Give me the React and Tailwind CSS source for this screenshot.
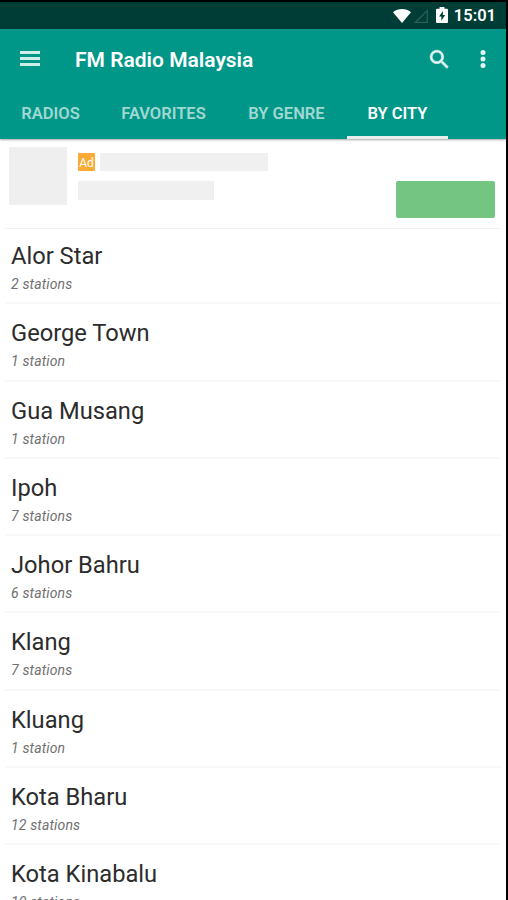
import React from "react";

const tabs = [
  { label: "RADIOS", className: "w-[101px]" },
  { label: "FAVORITES", className: "w-[125px]" },
  { label: "BY GENRE", className: "w-[121px]" },
  { label: "BY CITY", className: "w-[101px]", active: true },
];

const cities = [
  { name: "Alor Star", count: 2 },
  { name: "George Town", count: 1 },
  { name: "Gua Musang", count: 1 },
  { name: "Ipoh", count: 7 },
  { name: "Johor Bahru", count: 6 },
  { name: "Klang", count: 7 },
  { name: "Kluang", count: 1 },
  { name: "Kota Bharu", count: 12 },
  { name: "Kota Kinabalu", count: 10 },
];

const StatusBar = () => (
  <div className="flex h-[29px] shrink-0 items-center justify-end border-t-2 border-black bg-[#003d36] pr-[10px] text-white">
    {/* Wifi */}
    <svg className="h-[14px] w-[18px]" viewBox="0 0 18 14" fill="currentColor">
      <path d="M9 14 0 3.2C2.6 1.1 5.700 0 9 0s6.400 1.100 9 3.200z" />
    </svg>
    {/* No signal */}
    <svg className="ml-[3px] h-[14px] w-[14px]" viewBox="0 0 14 14" fill="none" stroke="#2c6059" strokeWidth="1.3">
      <path d="M1.600 13.300 13.300 1.600v11.700z" />
    </svg>
    {/* Battery charging */}
    <svg className="ml-[8px] mb-px h-[16px] w-[12px]" viewBox="0 0 11 16" preserveAspectRatio="none">
      <path fill="currentColor" d="M3.300 0h4.400v1.800H10a1 1 0 0 1 1 1V15a1 1 0 0 1-1 1H1a1 1 0 0 1-1-1V2.800a1 1 0 0 1 1-1h2.300z" />
      <path fill="#003d36" d="M6.300 4 2.800 9.600h2.100V13.800L8.400 8H6.300z" />
    </svg>
    <span className="ml-[6px] pt-[2px] text-[16.500px] font-semibold leading-none">15:01</span>
  </div>
);

const Toolbar = () => (
  <div className="flex h-[61px] items-center pl-5 pr-5 text-white">
    <svg className="mb-[3px] h-[15px] w-5" viewBox="0 0 20 15" fill="#cfeeea">
      <path d="M0 0h20v3H0zM0 6h20v3H0zM0 12h20v3H0z" />
    </svg>
    <h1 className="ml-[35px] flex-1 pt-px text-[21px] font-semibold leading-none">FM Radio Malaysia</h1>
    <svg className="mb-px h-[25px] w-[25px]" viewBox="0 0 24 24" fill="#e3f5f3" stroke="#e3f5f3" strokeWidth="0.6">
      <path d="M15.500 14h-.79l-.28-.27A6.471 6.471 0 0 0 16 9.500 6.500 6.500 0 1 0 9.500 16c1.610 0 3.090-.59 4.230-1.570l.27.28v.79l5 4.990L20.490 19l-4.990-5zm-6 0C7.010 14 5 11.990 5 9.500S7.010 5 9.500 5 14 7.010 14 9.500 11.990 14 9.500 14z" />
    </svg>
    <svg className="mb-px ml-[28px] h-[18px] w-[6px]" viewBox="0 0 6 18" fill="#e3f5f3">
      <circle cx="3" cy="2.500" r="2.500" />
      <circle cx="3" cy="9" r="2.500" />
      <circle cx="3" cy="15.500" r="2.500" />
    </svg>
  </div>
);

const Tabs = () => (
  <div className="flex h-[49px] text-[16.500px] font-semibold">
    {tabs.map((tab) => (
      <div
        key={tab.label}
        className={`flex shrink-0 items-center justify-center border-b-[3px] pt-[3px] ${tab.className} ${
          tab.active ? "border-[#e8eeed] text-white" : "border-transparent text-[#a0d8d2]"
        }`}
      >
        {tab.label}
      </div>
    ))}
  </div>
);

// Placeholder for the ad while it is loading
const AdBanner = () => (
  <div className="flex h-[90px] px-[9px] pt-[8px]">
    <div className="h-[58px] w-[58px] bg-[#efefef]" />
    <div className="ml-[11px] flex-1 pt-[6px]">
      <div className="flex gap-[5px]">
        <span className="flex h-[18px] w-[17px] items-center justify-center rounded-[1px] bg-[#fbaa33] pt-[2px] text-[12px] leading-none text-white">
          Ad
        </span>
        <div className="h-[18px] w-[168px] bg-[#f0f0f0]" />
      </div>
      <div className="mt-[10px] h-[19px] w-[136px] bg-[#f0f0f0]" />
    </div>
    <div className="mr-[2px] mt-[34px] h-[37px] w-[99px] rounded-[2px] bg-[#73c581]" />
  </div>
);

const CityRow = ({ city }) => (
  <li className="mx-[5px] h-[77.250px] shrink-0 border-b-2 border-[#f8f8f8] pl-[6px] pt-[15px]">
    <div className="text-[23.700px] leading-[28px] text-[#2c2c2c]">{city.name}</div>
    <div className="mt-[5px] text-[14px] italic leading-[18px] tracking-[0.150px] text-[#707070]">
      {city.count} {city.count === 1 ? "station" : "stations"}
    </div>
  </li>
);

const App = () => {
  return (
    <div className="h-[900px] w-[508px] overflow-hidden border-r-2 border-black bg-white font-['Roboto',sans-serif]">
      <StatusBar />
      <header className="bg-[#009788] shadow-[0_1px_2px_rgba(0,0,0,0.35)]">
        <Toolbar />
        <Tabs />
      </header>
      <AdBanner />
      <div className="mx-[5px] -mt-px h-px bg-[#f3f3f3]" />
      <ul className="-mt-[2px]">
        {cities.map((city) => (
          <CityRow key={city.name} city={city} />
        ))}
      </ul>
    </div>
  );
};

export default App;
